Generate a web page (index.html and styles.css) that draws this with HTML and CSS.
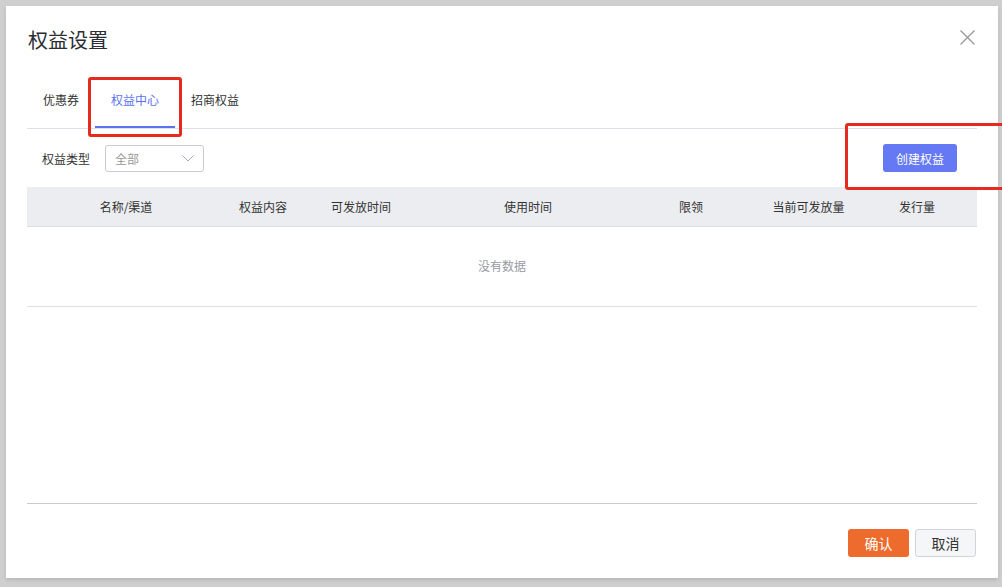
FILE: index.html
```html
<!DOCTYPE html>
<html lang="zh-CN">
<head>
  <meta charset="UTF-8">
  <title>权益设置</title>
  <link rel="stylesheet" href="styles.css">
</head>
<body>
  <div class="modal">
    <div class="modal-header">
      <h2 class="modal-title">权益设置</h2>
      <button class="close-button" aria-label="关闭">
        <svg width="15" height="15" viewBox="0 0 15 15">
          <path d="M0.5 0.5 L14.5 14.5 M14.5 0.5 L0.5 14.5" stroke="#9a9a9a" stroke-width="1.4" fill="none"/>
        </svg>
      </button>
    </div>

    <div class="modal-body">
      <div class="tabs">
        <span class="tab">优惠券</span>
        <span class="tab active">权益中心</span>
        <span class="tab">招商权益</span>
      </div>

      <div class="filter-row">
        <label class="filter-label">权益类型</label>
        <div class="select">
          <span>全部</span>
          <svg width="12" height="7" viewBox="0 0 12 7">
            <path d="M0.5 0.5 L6 6 L11.5 0.5" stroke="#a8abb2" stroke-width="1" fill="none"/>
          </svg>
        </div>
        <button class="primary-button">创建权益</button>
      </div>

      <table class="data-table">
        <colgroup>
          <col style="width: 198px">
          <col style="width: 76px">
          <col style="width: 120px">
          <col style="width: 214px">
          <col style="width: 112px">
          <col style="width: 123px">
          <col style="width: 94px">
          <col>
        </colgroup>
        <thead>
          <tr>
            <th>名称/渠道</th>
            <th>权益内容</th>
            <th>可发放时间</th>
            <th>使用时间</th>
            <th>限领</th>
            <th>当前可发放量</th>
            <th>发行量</th>
            <th></th>
          </tr>
        </thead>
        <tbody>
          <tr>
            <td class="empty" colspan="8">没有数据</td>
          </tr>
        </tbody>
      </table>
    </div>

    <div class="modal-footer">
      <button class="confirm-button">确认</button>
      <button class="cancel-button">取消</button>
    </div>
  </div>

  <div class="mark mark-tab"></div>
  <div class="mark mark-create"></div>
</body>
</html>
```
FILE: styles.css
```css
body {
  margin: 0;
  background: #cfcfcf;
  font-family: "Noto Sans CJK SC", "Noto Sans", sans-serif;
  color: #333333;
  height: 587px;
  overflow: hidden;
  position: relative;
}

.modal {
  margin: 6px 0 0 6px;
  width: 992px;
  height: 572px;
  background: #ffffff;
  box-shadow: 0 2px 4px rgba(0, 0, 0, 0.12);
  display: flex;
  flex-direction: column;
}

.modal-header {
  display: flex;
  justify-content: space-between;
  align-items: flex-start;
  padding: 22px 23px 0 22px;
}

.modal-title {
  margin: 0;
  font-size: 20px;
  line-height: 24px;
  font-weight: normal;
  color: #2b2d33;
}

.close-button {
  background: none;
  border: none;
  padding: 0;
  margin-top: 2px;
  width: 15px;
  height: 15px;
  cursor: pointer;
}

.modal-body {
  flex: 1;
  padding: 0 21px 0 21px;
}

.tabs {
  display: flex;
  margin-top: 22px;
  border-bottom: 1px solid #dfe0e6;
}

.tab {
  padding: 0 16px;
  font-size: 12px;
  line-height: 52px;
  border-bottom: 2px solid transparent;
  color: #333333;
}

.tab.active {
  color: #5b73f0;
  border-bottom-color: #5b73f0;
}

.filter-row {
  display: flex;
  align-items: center;
  height: 58px;
  padding-left: 15px;
}

.filter-label {
  font-size: 12px;
  color: #333333;
}

.select {
  margin-left: 15px;
  width: 99px;
  height: 27px;
  box-sizing: border-box;
  border: 1px solid #c9ccd3;
  border-radius: 3px;
  display: flex;
  align-items: center;
  justify-content: space-between;
  padding: 0 9px;
  font-size: 12px;
  color: #999999;
}

.primary-button {
  margin-left: auto;
  margin-right: 20px;
  width: 74px;
  height: 28px;
  border: none;
  border-radius: 3px;
  background: #6679f4;
  color: #ffffff;
  font-family: inherit;
  font-size: 12px;
  cursor: pointer;
}

.data-table {
  width: 100%;
  border-collapse: collapse;
  table-layout: fixed;
  font-size: 12px;
}

.data-table th {
  height: 39px;
  padding: 0;
  background: #ebedf1;
  border-bottom: 1px solid #dcdde3;
  font-weight: normal;
  color: #333333;
  text-align: center;
}

.data-table td.empty {
  height: 77px;
  padding: 0 0 2px;
  text-align: center;
  color: #999aa3;
  border-bottom: 1px solid #dcdde3;
}

.modal-footer {
  display: flex;
  justify-content: flex-end;
  gap: 6px;
  margin: 0 21px;
  padding: 25px 1px 21px 0;
  border-top: 1px solid #c9c9ce;
}

.confirm-button,
.cancel-button {
  width: 61px;
  height: 28px;
  border-radius: 3px;
  font-family: inherit;
  font-size: 14px;
  cursor: pointer;
}

.confirm-button {
  background: #ec6b2d;
  border: none;
  color: #ffffff;
}

.cancel-button {
  background: #f5f6f8;
  border: 1px solid #d0d3d9;
  color: #333333;
}

.mark {
  position: absolute;
  border: 3px solid #e52b20;
  border-radius: 3px;
  box-sizing: border-box;
}

.mark-tab {
  left: 88px;
  top: 77px;
  width: 94px;
  height: 60px;
}

.mark-create {
  left: 845px;
  top: 123px;
  width: 170px;
  height: 67px;
}
```
